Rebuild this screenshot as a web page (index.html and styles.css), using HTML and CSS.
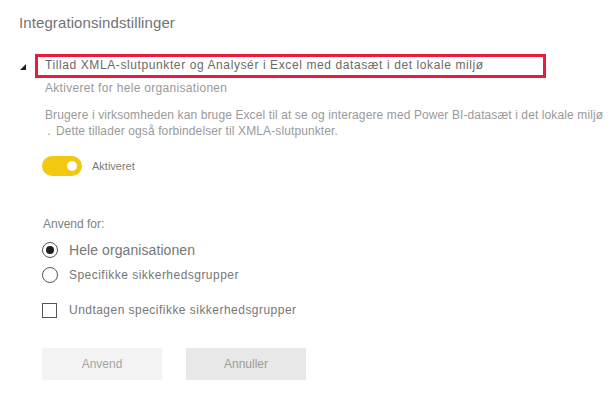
FILE: index.html
```html
<!DOCTYPE html>
<html>
<head>
<meta charset="utf-8">
<link rel="stylesheet" href="styles.css">
</head>
<body>
<div class="page">
  <h1 class="title">Integrationsindstillinger</h1>
  <div class="setting">
    <div class="head-row">
      <span class="caret"></span>
      <div class="highlight">Tillad XMLA-slutpunkter og Analysér i Excel med datasæt i det lokale miljø</div>
    </div>
    <div class="status">Aktiveret for hele organisationen</div>
    <p class="desc">Brugere i virksomheden kan bruge Excel til at se og interagere med Power BI-datasæt i det lokale miljø<br><span class="dot">.</span> Dette tillader også forbindelser til XMLA-slutpunkter.</p>
    <div class="toggle-row">
      <span class="toggle"><span class="knob"></span></span>
      <span class="toggle-label">Aktiveret</span>
    </div>
    <div class="apply">
      <div class="apply-label">Anvend for:</div>
      <label class="radio-row big"><span class="radio checked"></span><span>Hele organisationen</span></label>
      <label class="radio-row"><span class="radio"></span><span>Specifikke sikkerhedsgrupper</span></label>
      <label class="check-row"><span class="checkbox"></span><span>Undtagen specifikke sikkerhedsgrupper</span></label>
    </div>
    <div class="buttons">
      <button class="btn apply-btn">Anvend</button>
      <button class="btn cancel-btn">Annuller</button>
    </div>
  </div>
</div>
</body>
</html>
```
FILE: styles.css
```css
* { box-sizing: border-box; }
html, body { margin: 0; padding: 0; background: #fff; }
body { font-family: "Liberation Sans", Arial, sans-serif; color: #666; }
.page { padding: 13px 0 0 19px; width: 610px; height: 403px; overflow: hidden; }
.title { margin: 0; font-size: 15px; font-weight: normal; color: #737373; line-height: 20px; letter-spacing: 0.1px; }
.setting { margin-top: 21px; }
.head-row { display: flex; align-items: center; }
.caret { width: 0; height: 0; border-style: solid; border-width: 0 0 6px 6px; border-color: transparent transparent #1f1f1f transparent; margin: 1px 9px 0 1px; }
.highlight { width: 511px; height: 24px; border: 3px solid #ed1b3b; padding: 0 0 0 7px; font-size: 12px; line-height: 16px; color: #6a6a6a; letter-spacing: 0.6px; white-space: nowrap; }
.status { margin: 2px 0 0 26px; font-size: 12px; line-height: 16px; color: #999; letter-spacing: 0.31px; }
.desc { margin: 11px 0 0 26px; font-size: 12px; line-height: 16px; color: #9a9a9a; white-space: nowrap; letter-spacing: 0.11px; }
.desc .dot { margin-left: 2px; margin-right: 2px; }
.toggle-row { display: flex; align-items: center; margin: 17px 0 0 23px; }
.toggle { position: relative; width: 40px; height: 20px; border-radius: 10px; background: #f2c811; display: inline-block; }
.knob { position: absolute; right: 5px; top: 5px; width: 10px; height: 10px; border-radius: 50%; background: #fff; }
.toggle-label { margin-left: 10px; font-size: 11px; color: #7a7a7a; }
.apply { margin: 41px 0 0 23px; }
.apply-label { font-size: 12px; line-height: 14px; color: #808080; margin-left: 1px; }
.radio-row, .check-row { display: flex; align-items: center; font-size: 12px; color: #777; letter-spacing: 0.47px; }
.radio-row { height: 25px; }
.radio-row.big { margin-top: 6px; font-size: 14px; letter-spacing: 0.08px; }
.radio { width: 16px; height: 16px; border: 1px solid #555; border-radius: 50%; margin-right: 11px; display: flex; align-items: center; justify-content: center; }
.radio.checked::after { content: ""; width: 8px; height: 8px; border-radius: 50%; background: #1f1f1f; }
.check-row { margin-top: 15px; height: 16px; }
.checkbox { width: 15px; height: 15px; border: 1px solid #555; margin-right: 12px; }
.buttons { display: flex; gap: 24px; margin: 30px 0 0 23px; }
.btn { width: 120px; height: 32px; border: none; font-family: "Liberation Sans", Arial, sans-serif; font-size: 12px; color: #a6a6a6; padding: 0; }
.apply-btn { background: #f3f3f3; }
.cancel-btn { background: #e8e8e8; color: #9c9c9c; }
```
